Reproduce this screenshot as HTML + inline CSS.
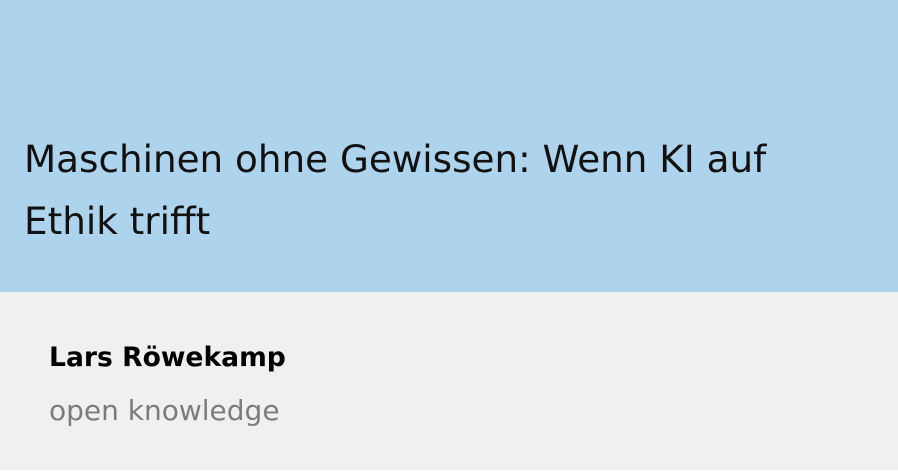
<!DOCTYPE html>
<html><head><meta charset="utf-8"><style>
html,body{margin:0;padding:0;width:898px;height:476px;overflow:hidden;background:#fff;font-family:"DejaVu Sans","Liberation Sans",sans-serif;}
.top{position:absolute;left:0;top:0;width:898px;height:292px;background:#aed3ec;}
.title{position:absolute;left:24px;top:128px;font-size:37.3px;line-height:62px;color:#111;width:870px;white-space:nowrap;}
.bot{position:absolute;left:0;top:292px;width:898px;height:178px;background:#f0f0f0;}
.name{position:absolute;left:49px;top:342px;font-size:26.6px;font-weight:bold;color:#000;white-space:nowrap;}
.org{position:absolute;left:49px;top:394px;font-size:28px;color:#7c7c7c;white-space:nowrap;}
</style></head><body>
<div class="top"><div class="title">Maschinen ohne Gewissen: Wenn KI auf<br>Ethik trifft</div></div>
<div class="bot"></div>
<div class="name">Lars Röwekamp</div>
<div class="org">open knowledge</div>
</body></html>
